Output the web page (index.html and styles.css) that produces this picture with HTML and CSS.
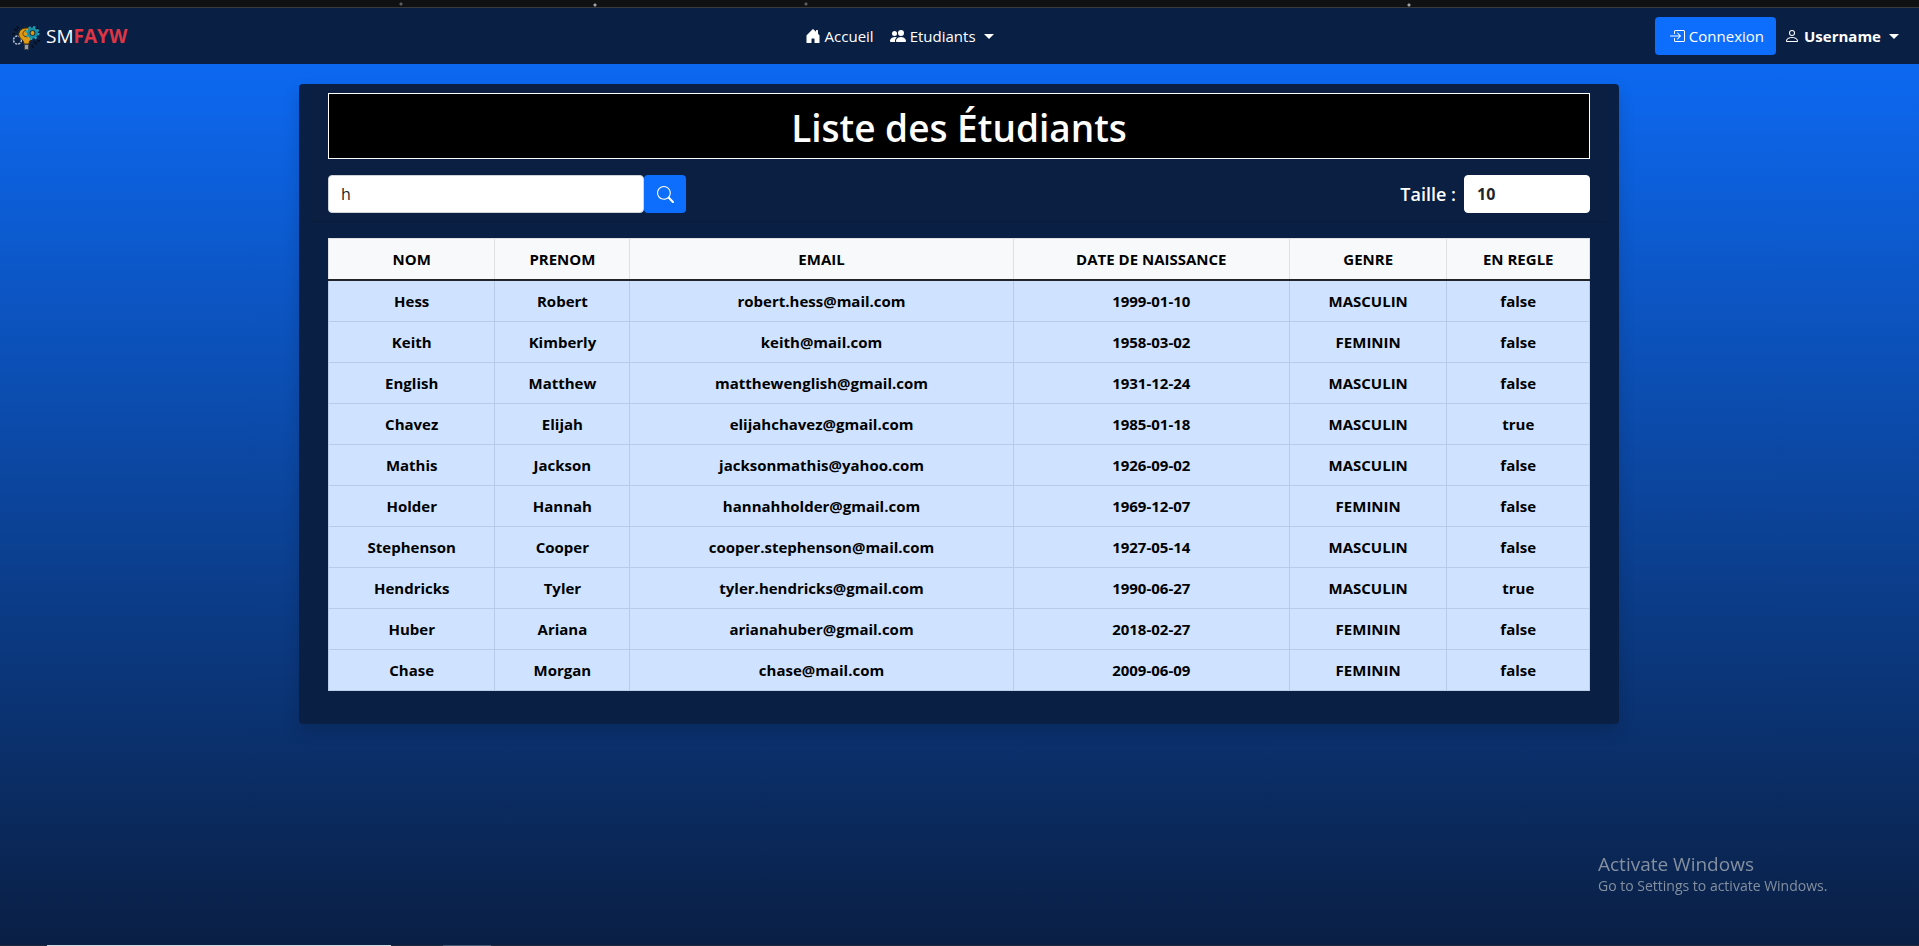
FILE: index.html
```html
<!DOCTYPE html>
<html lang="fr">
<head>
<meta charset="utf-8">
<title>Liste des Étudiants</title>
<link rel="stylesheet" href="styles.css">
</head>
<body>
<div class="top-strip"></div>
<nav class="navbar">
  <a class="brand" href="#">
    <svg class="brand-logo" viewBox="0 0 28 24" aria-hidden="true">
      <path d="M2 3l3 2M5 0l1 3M0 8h3M22 16l3 2M20 19l1 3M25 15h3M26 2l-2 2" stroke="#07101f" stroke-width="2"/>
      <circle cx="5.500" cy="14" r="4" fill="none" stroke="#b8c4d6" stroke-width="1.500" stroke-dasharray="2.200 1"/>
      <path d="M14 2C8 2 6 7 7 10c1 3 5 4 5 8h5c0-3 2-4 3-6L19 3c-2-1-3-1-5-1z" fill="#e09a12" stroke="#3b2a08"/>
      <path d="M14 4c-3 1-4 4-2 6l3 1" fill="none" stroke="#5a3c08" stroke-width="1"/>
      <path d="M12.500 18.500h4V22v1.500h-4z" fill="#9aa0a6" stroke="#39404a"/>
      <circle cx="20.500" cy="7" r="4" fill="#e09a12" stroke="#178ea6" stroke-width="3"/>
      <circle cx="20.500" cy="7" r="6" fill="none" stroke="#20a5bd" stroke-width="2" stroke-dasharray="2.200 2.500"/>
      <circle cx="20.500" cy="7" r="2.500" fill="none" stroke="#0b2a3e"/>
    </svg>
    <span>SM<b class="brand-accent">FAYW</b></span>
  </a>
  <div class="nav-links">
    <a class="nav-link" href="#">
      <svg class="icon" viewBox="0 0 16 16" aria-hidden="true"><path d="M6.500 14.500v-3.505c0-.245.250-.495.500-.495h2c.250 0 .500.250.500.500v3.500a.5.5 0 0 0 .5.5h4a.5.5 0 0 0 .5-.5v-7a.5.5 0 0 0-.146-.354L13 5.793V2.500a.5.5 0 0 0-.5-.5h-1a.5.5 0 0 0-.5.5v1.293L8.354 1.146a.5.5 0 0 0-.708 0l-6 6A.5.5 0 0 0 1.500 7.500v7a.5.5 0 0 0 .5.5h4a.5.5 0 0 0 .5-.5Z"/></svg>
      Accueil</a>
    <a class="nav-link" href="#">
      <svg class="icon" viewBox="0 0 16 16" aria-hidden="true"><path d="M7 14s-1 0-1-1 1-4 5-4 5 3 5 4-1 1-1 1H7zm4-6a3 3 0 1 0 0-6 3 3 0 0 0 0 6z"/><path d="M5.216 14A2.238 2.238 0 0 1 5 13c0-1.355.680-2.750 1.936-3.720A6.325 6.325 0 0 0 5 9c-4 0-5 3-5 4s1 1 1 1h4.216z"/><path d="M4.500 8a2.500 2.500 0 1 0 0-5 2.500 2.500 0 0 0 0 5z"/></svg>
      Etudiants<span class="caret"></span></a>
  </div>
  <div class="nav-user">
    <button class="login" type="button">
      <svg class="icon" viewBox="0 0 16 16" aria-hidden="true"><path fill-rule="evenodd" d="M6 3.500a.5.5 0 0 1 .5-.5h8a.5.5 0 0 1 .5.5v9a.5.5 0 0 1-.5.5h-8a.5.5 0 0 1-.5-.5v-2a.5.5 0 0 0-1 0v2A1.500 1.500 0 0 0 6.500 14h8a1.500 1.500 0 0 0 1.500-1.500v-9A1.500 1.500 0 0 0 14.500 2h-8A1.500 1.500 0 0 0 5 3.500v2a.5.5 0 0 0 1 0v-2z"/><path fill-rule="evenodd" d="M11.854 8.354a.5.5 0 0 0 0-.708l-3-3a.5.5 0 1 0-.708.708L10.293 7.500H1.500a.5.5 0 0 0 0 1h8.793l-2.147 2.146a.5.5 0 0 0 .708.708l3-3z"/></svg>
      Connexion</button>
    <a class="nav-link user" href="#">
      <svg class="icon" viewBox="0 0 16 16" aria-hidden="true"><path d="M8 8a3 3 0 1 0 0-6 3 3 0 0 0 0 6zm2-3a2 2 0 1 1-4 0 2 2 0 0 1 4 0zm4 8c0 1-1 1-1 1H3s-1 0-1-1 1-4 6-4 6 3 6 4zm-1-.004c-.001-.246-.154-.986-.832-1.664C11.516 10.680 10.289 10 8 10c-2.290 0-3.516.680-4.168 1.332-.678.678-.830 1.418-.832 1.664h10z"/></svg>
      Username<span class="caret"></span></a>
  </div>
</nav>
<main class="page">
  <section class="card">
    <header class="card-header">
      <h1 class="title">Liste des Étudiants</h1>
      <div class="toolbar">
        <form class="search">
          <input class="field" type="text" value="h" aria-label="Rechercher">
          <button class="search-button" type="button" aria-label="Lancer la recherche">
            <svg class="icon" viewBox="0 0 16 16" aria-hidden="true"><path d="M11.742 10.344a6.500 6.500 0 1 0-1.397 1.398h-.001c.030.040.062.078.098.115l3.850 3.850a1 1 0 0 0 1.415-1.414l-3.850-3.850a1.007 1.007 0 0 0-.115-.100zM12 6.500a5.500 5.500 0 1 1-11 0 5.500 5.500 0 0 1 11 0z"/></svg>
          </button>
        </form>
        <div class="size">
          <label class="size-label" for="taille">Taille :</label>
          <select class="field size-field" id="taille"><option>10</option><option>20</option><option>50</option></select>
        </div>
      </div>
    </header>
    <div class="card-body">
      <table class="students">
        <colgroup><col class="c-nom"><col class="c-prenom"><col class="c-email"><col class="c-date"><col class="c-genre"><col class="c-regle"></colgroup>
        <thead><tr><th>NOM</th><th>PRENOM</th><th>EMAIL</th><th>DATE DE NAISSANCE</th><th>GENRE</th><th>EN REGLE</th></tr></thead>
        <tbody>
          <tr><td>Hess</td><td>Robert</td><td>robert.hess@mail.com</td><td>1999-01-10</td><td>MASCULIN</td><td>false</td></tr>
          <tr><td>Keith</td><td>Kimberly</td><td>keith@mail.com</td><td>1958-03-02</td><td>FEMININ</td><td>false</td></tr>
          <tr><td>English</td><td>Matthew</td><td>matthewenglish@gmail.com</td><td>1931-12-24</td><td>MASCULIN</td><td>false</td></tr>
          <tr><td>Chavez</td><td>Elijah</td><td>elijahchavez@gmail.com</td><td>1985-01-18</td><td>MASCULIN</td><td>true</td></tr>
          <tr><td>Mathis</td><td>Jackson</td><td>jacksonmathis@yahoo.com</td><td>1926-09-02</td><td>MASCULIN</td><td>false</td></tr>
          <tr><td>Holder</td><td>Hannah</td><td>hannahholder@gmail.com</td><td>1969-12-07</td><td>FEMININ</td><td>false</td></tr>
          <tr><td>Stephenson</td><td>Cooper</td><td>cooper.stephenson@mail.com</td><td>1927-05-14</td><td>MASCULIN</td><td>false</td></tr>
          <tr><td>Hendricks</td><td>Tyler</td><td>tyler.hendricks@gmail.com</td><td>1990-06-27</td><td>MASCULIN</td><td>true</td></tr>
          <tr><td>Huber</td><td>Ariana</td><td>arianahuber@gmail.com</td><td>2018-02-27</td><td>FEMININ</td><td>false</td></tr>
          <tr><td>Chase</td><td>Morgan</td><td>chase@mail.com</td><td>2009-06-09</td><td>FEMININ</td><td>false</td></tr>
        </tbody>
      </table>
    </div>
  </section>
</main>
<aside class="watermark">
  <p class="watermark-title">Activate Windows</p>
  <p class="watermark-text">Go to Settings to activate Windows.</p>
</aside>
<div class="bottom-edge"></div>
</body>
</html>
```

FILE: styles.css
```css
* { box-sizing: border-box; }

body {
  margin: 0;
  min-height: 100vh;
  display: flex;
  flex-direction: column;
  background: linear-gradient(#0d6efd, #0a1f44);
  color: #fff;
  font: 16px/24px "Segoe UI", "Open Sans", "Noto Sans", sans-serif;
}

a { color: inherit; text-decoration: none; }
button, input, select { font: inherit; }

.top-strip {
  height: 8px;
  background:
    radial-gradient(circle at 595px 5px, #a0a4a8 1px, transparent 2px),
    radial-gradient(circle at 401px 4px, #5c5e61 1px, transparent 2px),
    radial-gradient(circle at 806px 4px, #5c5e61 1px, transparent 2px),
    radial-gradient(circle at 1409px 5px, #a0a4a8 1px, transparent 2px),
    #101113;
  border-bottom: 1px solid #3a3b3e;
}

.navbar {
  display: flex;
  justify-content: space-between;
  align-items: center;
  min-height: 56px;
  padding: 0 20px 0 12px;
  background: #0a1f44;
  font-size: 15px;
}

.brand { display: flex; align-items: center; gap: 6px; font-size: 19px; line-height: 30px; }
.brand-logo { width: 28px; height: 24px; margin-top: 4px; }
.brand-accent { color: #dc3545; }

.nav-links { display: flex; gap: 16px; padding-left: 16px; }
.nav-link { display: flex; align-items: center; gap: 4px; }
.icon { width: 16px; height: 16px; fill: currentColor; flex: none; }

.caret {
  margin-left: 4px;
  border-top: 5px solid;
  border-left: 5px solid transparent;
  border-right: 5px solid transparent;
}

.nav-user { display: flex; align-items: center; gap: 8px; }
.user { font-weight: 700; }

.login {
  display: flex;
  align-items: center;
  gap: 4px;
  height: 38px;
  padding: 0 12px 0 14px;
  border: 0;
  border-radius: 4px;
  background: #0d6efd;
  color: #fff;
}

.page {
  flex: 1;
  padding: 20px 17px 20px 16px;
}

.card {
  max-width: 1320px;
  margin: 0 auto;
  padding: 0 13px 17px;
  border-radius: 4px;
  background: #0a1f44;
  box-shadow: 0 8px 16px rgba(0, 0, 0, 0.15);
}

.card-header {
  padding: 9px 16px 8px;
  border-bottom: 1px solid #0a1b3a;
  background: #0a1f41;
}

.title {
  margin: 0 0 16px;
  padding: 10px 0 6px;
  border: 1px solid #fff;
  background: #000;
  font-size: 37px;
  line-height: 48px;
  font-weight: 600;
  text-align: center;
}

.toolbar { display: flex; justify-content: space-between; }
.search { display: flex; width: 358px; }

.field {
  width: 100%;
  min-width: 0;
  height: 38px;
  padding: 6px 12px;
  border: 1px solid #ced4da;
  border-radius: 4px;
  background: #fff;
  color: #212529;
  appearance: none;
}

.search-button {
  display: grid;
  place-items: center;
  flex: none;
  width: 42px;
  border: 0;
  border-radius: 4px;
  background: #0d6efd;
  color: #fff;
}

.search-button .icon { width: 17px; height: 17px; }

.size { display: flex; align-items: center; gap: 8px; }
.size-label { font-size: 18px; font-weight: 600; white-space: nowrap; }
.size-field { width: 126px; border-color: #fff; font-weight: 700; }

.card-body { padding: 16px; }

.students {
  width: 100%;
  table-layout: fixed;
  border-collapse: collapse;
  font-size: 15px;
  font-weight: 700;
  text-align: center;
  color: #000;
}

.c-nom { width: 13.2%; }
.c-prenom { width: 10.7%; }
.c-email { width: 30.4%; }
.c-date { width: 21.9%; }
.c-genre { width: 12.5%; }
.c-regle { width: 11.3%; }

.students th, .students td { padding: 8px; }
.students th { background: #f8f9fa; border: 1px solid #dfe0e1; border-bottom: 2px solid #212529; }
.students td { background: #cfe2ff; border: 1px solid #bacbe6; }

.watermark {
  position: fixed;
  right: 84px;
  bottom: 50px;
  width: 237px;
  color: #84909f;
  white-space: nowrap;
}

.watermark p { margin: 0; }
.watermark-title { font-size: 19px; }
.watermark-text { font-size: 14px; line-height: 20px; }

.bottom-edge {
  height: 1px;
  background: linear-gradient(90deg, #1c2a3c 47px, #d5dae2 47px 391px, #1c2a3c 391px 443px, #46566d 443px 491px, #1c2a3c 491px);
}
```
